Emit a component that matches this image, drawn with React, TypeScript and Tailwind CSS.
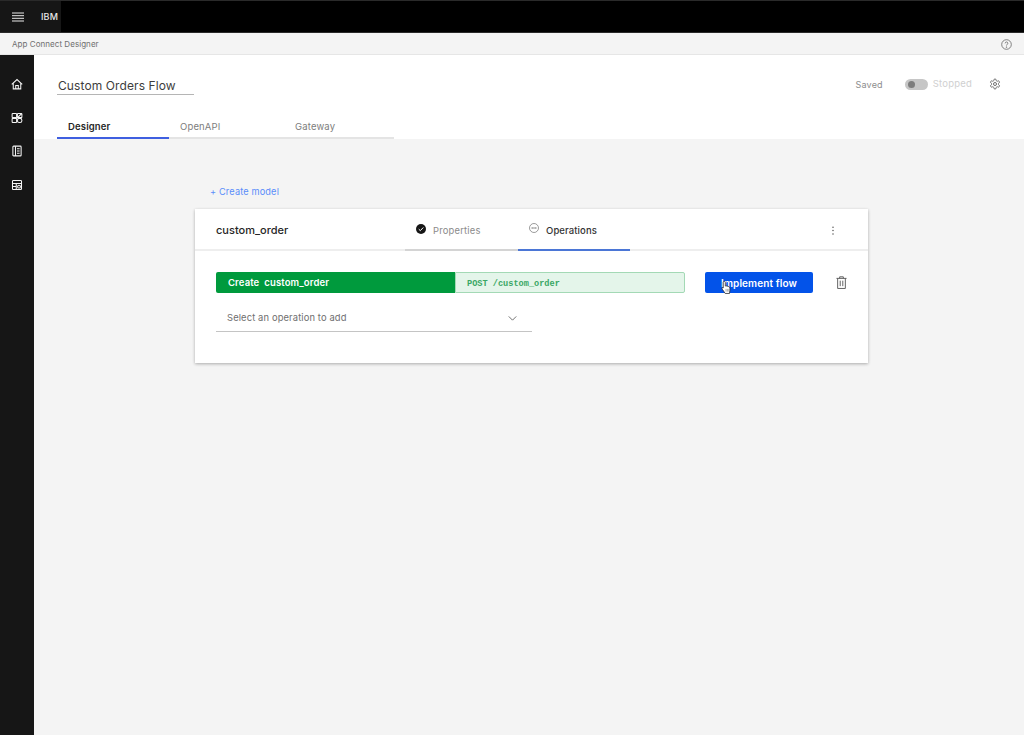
import React from "react";

const font = { fontFamily: '"Inter", "Noto Sans", sans-serif' };

function NavIcon({ children }: { children: React.ReactNode }) {
    return (
        <svg viewBox="0 0 16 16" className="w-[12px] h-[12px]" fill="none" stroke="#f4f4f4" strokeWidth="1.4">
            {children}
        </svg>
    );
}

function Tab({ label, active, width }: { label: string; active?: boolean; width: string }) {
    return (
        <div className={`${width} h-[24px] pl-[11px] pt-[5px] flex items-start text-[9.5px] leading-[14px] tracking-[0.15px] border-b-2 ${active ? "border-[#3f5fe0] text-[#262626] font-semibold" : "border-[#e4e4e4] text-[#7d7d7d]"}`}>
            {label}
        </div>
    );
}

export default function App() {
    return (
        <div className="w-[1024px] h-[735px] overflow-hidden flex flex-col bg-[#f4f4f4]" style={font}>
            <div className="h-[33px] bg-black border-y border-y-[#2a2a2a] flex shrink-0">
                <div className="w-[61px] bg-[#161616] flex items-center pl-[12px] gap-[17px]">
                    <svg viewBox="0 0 12 10" className="w-[12px] h-[10px] shrink-0" stroke="#e8e8e8" strokeWidth="1">
                        <path d="M0 1h12M0 3.7h12M0 6.3h12M0 9h12" />
                    </svg>
                    <span className="text-[9px] text-[#e8e8e8] font-medium tracking-[0.15px]">IBM</span>
                </div>
            </div>

            <div className="h-[22px] bg-[#f4f4f4] border-b border-[#e6e6e6] flex items-center justify-between pl-[12px] pr-[12px] pt-[1px] shrink-0">
                <span className="text-[8px] text-[#6f6f6f] tracking-[0.05px]">App Connect Designer</span>
                <svg viewBox="0 0 16 16" className="w-[11px] h-[11px]" fill="none" stroke="#6a6a6a" strokeWidth="1.2">
                    <circle cx="8" cy="8" r="7" />
                    <path d="M6 6.3c0-1.2 1-2 2-2s2 .8 2 1.9c0 1.6-2 1.6-2 3.3" />
                    <circle cx="8" cy="11.8" r=".5" />
                </svg>
            </div>

            <div className="flex flex-1 min-h-0">
                <div className="w-[34px] bg-[#161616] shrink-0 flex flex-col items-center pt-[23px] gap-[21.7px]">
                    <NavIcon>
                        <path d="M1 8.5 8 2l7 6.5M3 7v7.5h10V7M6.3 14.5v-4.5h3.4v4.5" />
                    </NavIcon>
                    <NavIcon>
                        <rect x="1.5" y="2" width="6" height="5.5" rx="1" />
                        <rect x="8.5" y="2" width="6" height="5.5" rx="1" />
                        <rect x="1.5" y="8.5" width="6" height="5.5" rx="1" />
                        <rect x="8.5" y="8.5" width="6" height="5.5" rx="2.5" />
                        <path d="M8.5 7.5 14.5 2" />
                    </NavIcon>
                    <NavIcon>
                        <rect x="2.5" y="1.5" width="11" height="13" rx="1" />
                        <path d="M6 1.5v13M8 5h3.5M8 8h3.5M8 11h3.5" />
                    </NavIcon>
                    <NavIcon>
                        <rect x="2" y="2" width="12" height="12" rx="1" />
                        <path d="M2 6h12M2 10h5M7 6v8" />
                        <circle cx="10.7" cy="10.2" r="1.9" />
                    </NavIcon>
                </div>

                <div className="flex-1 flex flex-col min-w-0">
                    <div className="h-[84px] bg-white shrink-0 flex flex-col pl-[23px] pr-[23px]">
                        <div className="flex justify-between pt-[21px]">
                            <div className="w-[137px] h-[19px] border-b border-[#b5b5b5] pl-px pt-[1px] text-[12px] leading-[18px] text-[#3d3d3d] tracking-[0.1px]">
                                Custom Orders Flow
                            </div>
                            <div className="flex items-center h-[15px] text-[9.5px] mt-[1px]">
                                <span className="text-[#8d8d8d] text-[9px] tracking-[0.2px]">Saved</span>
                                <div className="w-[23px] h-[11px] rounded-full bg-[#c6c6c6] ml-[22px] flex items-center pl-[3px]">
                                    <div className="w-[7px] h-[7px] rounded-full bg-[#7d7d7d]" />
                                </div>
                                <span className="text-[#d0d0d0] ml-[5px] tracking-[0.2px]">Stopped</span>
                                <svg viewBox="0 0 24 24" className="w-[12px] h-[12px] ml-[17px] -mt-[2px]" fill="none" stroke="#5f5f5f" strokeWidth="1.8">
                                    <path d="M12.2 2h-.4a2 2 0 0 0-2 2v.2a2 2 0 0 1-1 1.7l-.4.3a2 2 0 0 1-2 0l-.2-.1a2 2 0 0 0-2.7.7l-.2.4a2 2 0 0 0 .7 2.7l.2.1a2 2 0 0 1 1 1.7v.6a2 2 0 0 1-1 1.7l-.2.1a2 2 0 0 0-.7 2.7l.2.4a2 2 0 0 0 2.7.7l.2-.1a2 2 0 0 1 2 0l.4.3a2 2 0 0 1 1 1.7v.2a2 2 0 0 0 2 2h.4a2 2 0 0 0 2-2v-.2a2 2 0 0 1 1-1.7l.4-.3a2 2 0 0 1 2 0l.2.1a2 2 0 0 0 2.7-.7l.2-.4a2 2 0 0 0-.7-2.7l-.2-.1a2 2 0 0 1-1-1.7v-.6a2 2 0 0 1 1-1.7l.2-.1a2 2 0 0 0 .7-2.7l-.2-.4a2 2 0 0 0-2.7-.7l-.2.1a2 2 0 0 1-2 0l-.4-.3a2 2 0 0 1-1-1.7V4a2 2 0 0 0-2-2z" />
                                    <circle cx="12" cy="12" r="3" />
                                </svg>
                            </div>
                        </div>
                        <div className="flex mt-[20px]">
                            <Tab label="Designer" active width="w-[112px]" />
                            <Tab label="OpenAPI" width="w-[115px]" />
                            <Tab label="Gateway" width="w-[110px]" />
                        </div>
                    </div>

                    <div className="pl-[161px] pt-[47px]">
                        <div className="pl-[15px] text-[9.2px] leading-[12px] text-[#5a8dfa] tracking-[0.15px]">+ Create model</div>
                        <div className="w-[673px] h-[154px] mt-[11px] bg-white shadow-[0_1px_3px_rgba(0,0,0,0.3)]">
                            <div className="h-[42px] border-b-2 border-[#eeeeee] flex relative">
                                <div className="w-[210px] pl-[21px] pt-[14px] text-[11px] leading-[15px] font-medium text-[#262626]">custom_order</div>
                                <div className="w-[113px] h-[42px] border-b-2 border-[#d4d4d4] flex items-start pl-[11px] pt-[14px] gap-[7px]">
                                    <svg viewBox="0 0 12 12" className="w-[10px] h-[10px] mt-[1px]">
                                        <circle cx="6" cy="6" r="6" fill="#161616" />
                                        <path d="M3.3 6.2 5.2 8l3.5-3.8" fill="none" stroke="#fff" strokeWidth="1.2" />
                                    </svg>
                                    <span className="text-[9.4px] leading-[14px] mt-[1px] text-[#8a8a8a] tracking-[0.2px]">Properties</span>
                                </div>
                                <div className="w-[112px] h-[42px] border-b-2 border-[#4b76d6] flex items-start pl-[11px] pt-[14px] gap-[7px]">
                                    <svg viewBox="0 0 12 12" className="w-[10px] h-[10px]" fill="none">
                                        <circle cx="6" cy="6" r="5.4" stroke="#6a6a6a" strokeWidth=".8" />
                                        <path d="M3.2 6h1.2M5.4 6h1.2M7.6 6h1.2" stroke="#222" strokeWidth="1.2" />
                                    </svg>
                                    <span className="text-[9.5px] leading-[14px] mt-[1px] font-medium text-[#333333] tracking-[0.1px]">Operations</span>
                                </div>
                                <svg viewBox="0 0 4 12" className="w-[4px] h-[9px] ml-[201px] mt-[17px]" fill="#555555">
                                    <circle cx="2" cy="1.5" r="1" />
                                    <circle cx="2" cy="6" r="1" />
                                    <circle cx="2" cy="10.5" r="1" />
                                </svg>
                            </div>

                            <div className="pl-[21px] pt-[21px]">
                                <div className="flex items-center h-[21px]">
                                    <div className="w-[239px] h-[21px] bg-[#009a3d] rounded-l-[2px] pl-[12px] text-[9.5px] leading-[21px] font-semibold text-white whitespace-pre tracking-[0.12px]">Create  custom_order</div>
                                    <div className="w-[230px] h-[21px] bg-[#e4f5ea] border border-[#a3d9b5] rounded-r-[2px] pl-[11px] pt-[1px] text-[8.6px] leading-[21px] font-bold text-[#3aa765]" style={{ fontFamily: '"Liberation Mono", monospace' }}>POST /custom_order</div>
                                    <div className="w-[108px] h-[21px] ml-[20px] pt-[1px] bg-[#0353e9] rounded-[2px] flex items-center justify-center text-[10px] font-semibold text-white relative tracking-[0.1px]">
                                        Implement flow
                                        <svg viewBox="0 0 12 16" className="absolute left-[16px] top-[8px] w-[11px] h-[15px]">
                                            <path d="M3.5 1.2c.7 0 1.2.5 1.2 1.2v4l.8-.2 1 .2 1 .3 1 .4c.8.3 1.2.9 1.2 1.7v2.4L9.3 14.5H4.6L1.5 10 1 8.8c0-.6.6-.9 1.2-.5l.2.3V2.4c0-.7.5-1.2 1.1-1.2z" fill="#fff" stroke="#333" strokeWidth=".9" />
                                            <path d="M5.5 9.5v3M7 9.5v3M8.5 9.5v3" stroke="#555" strokeWidth=".5" />
                                        </svg>
                                    </div>
                                    <svg viewBox="0 0 12 14" className="w-[11px] h-[13px] ml-[23px]" fill="none" stroke="#555555" strokeWidth="1">
                                        <path d="M.5 2.5h11M4 2.5V.8h4v1.7M1.8 2.5v11h8.4v-11M4.6 5v6M7.4 5v6" />
                                    </svg>
                                </div>
                                <div className="w-[316px] h-[29px] mt-[10px] pt-[2px] border-b border-[#c4c4c4] flex items-center justify-between pl-[11px] pr-[15px]">
                                    <span className="text-[9.4px] text-[#6f6f6f] tracking-[0.12px]">Select an operation to add</span>
                                    <svg viewBox="0 0 10 6" className="w-[9px] h-[5px]" fill="none" stroke="#555555" strokeWidth="1">
                                        <path d="M.5.5 5 5l4.5-4.5" />
                                    </svg>
                                </div>
                            </div>
                        </div>
                    </div>
                </div>
            </div>
        </div>
    );
}
